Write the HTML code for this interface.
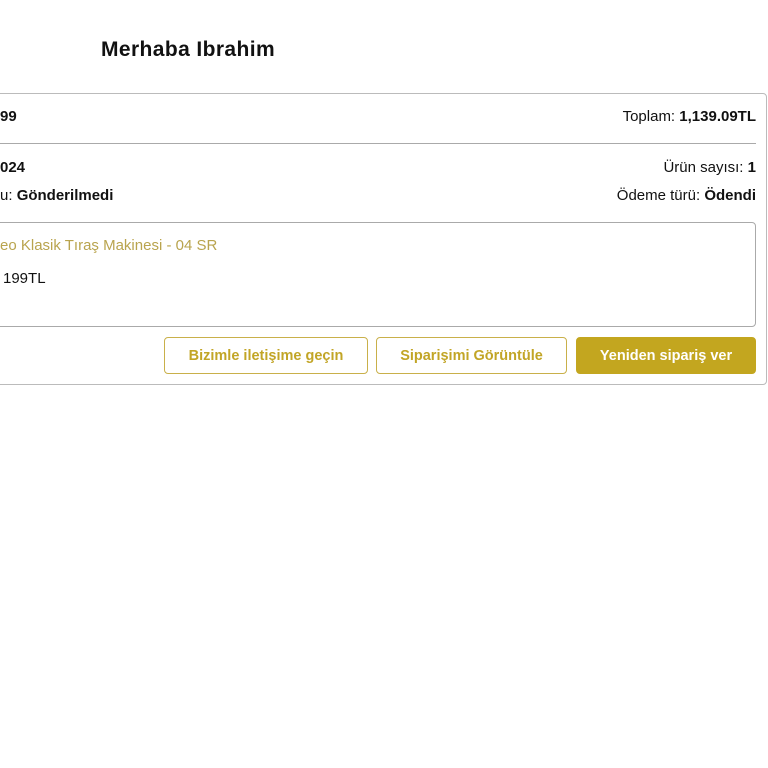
<!DOCTYPE html>
<html><head><meta charset="utf-8"><style>
html,body{margin:0;width:768px;height:768px;overflow:hidden;}
body{background:#fff;font-family:"Liberation Sans",sans-serif;color:#111;}
#w{position:absolute;left:0;top:0;width:768px;height:768px;overflow:hidden;}
*{box-sizing:border-box;}
.a{position:absolute;white-space:nowrap;font-size:15px;line-height:18px;}
.r{text-align:right;}
b{font-weight:bold;}
.card{position:absolute;left:-20px;top:93px;width:787px;height:292px;border:1px solid #bbb;border-radius:4px;}
.hr{position:absolute;left:0;width:756px;top:143px;height:1px;background:#aaa;}
.box{position:absolute;left:-20px;top:222px;width:776px;height:105px;border:1px solid #aaa;border-radius:4px;}
.btn{position:absolute;top:337px;height:37px;border:1px solid #c9b04a;border-radius:4px;color:#c2a526;font-weight:bold;font-size:14.5px;line-height:36px;text-align:center;}
</style></head><body><div id="w">
<div class="a" style="left:101px;top:38px;font-size:21px;line-height:24px;font-weight:bold;letter-spacing:0.4px">Merhaba Ibrahim</div>
<div class="card"></div>
<div class="hr"></div>
<div class="a" style="left:0;top:108px"><b>99</b></div>
<div class="a r" style="right:12px;top:108px">Toplam: <b>1,139.09TL</b></div>
<div class="a" style="left:0;top:159px"><b>024</b></div>
<div class="a" style="left:0;top:187px">u: <b>Gönderilmedi</b></div>
<div class="a r" style="right:12px;top:159px">Ürün sayısı: <b>1</b></div>
<div class="a r" style="right:12px;top:187px">Ödeme türü: <b>Ödendi</b></div>
<div class="box"></div>
<div class="a" style="left:0;top:237px;color:#b9a44e">eo Klasik Tıraş Makinesi - 04 SR</div>
<div class="a" style="left:3px;top:270px">199TL</div>
<div class="btn" style="left:164px;width:204px">Bizimle iletişime geçin</div>
<div class="btn" style="left:376px;width:191px">Siparişimi Görüntüle</div>
<div class="btn" style="left:576px;width:180px;background:#c3a61f;border-color:#c3a61f;color:#fff">Yeniden sipariş ver</div>
</div></body></html>
